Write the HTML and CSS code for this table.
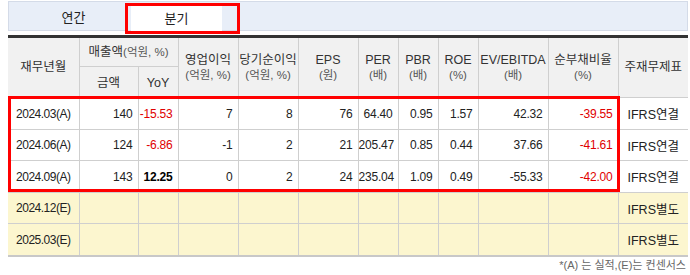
FILE: index.html
```html
<!DOCTYPE html>
<html lang="ko">
<head>
<meta charset="utf-8">
<link rel="stylesheet" href="styles.css">
</head>
<body>
<div class="wrap">
  <div class="tabs">
    <div class="tab">연간</div>
    <div class="tab active">분기</div>
    <div class="tab-mark"></div>
  </div>
  <div class="table-box">
    <table class="fin">
      <colgroup>
        <col class="c71"><col class="c59"><col class="c40"><col class="c60"><col class="c60"><col class="c60">
        <col class="c40"><col class="c40"><col class="c40"><col class="c70"><col class="c70"><col class="c70">
      </colgroup>
      <thead>
        <tr class="h1">
          <th rowspan="2">재무년월</th>
          <th colspan="2">매출액<span class="unit">(억원, %)</span></th>
          <th rowspan="2">영업이익<br><span class="unit">(억원, %)</span></th>
          <th rowspan="2">당기순이익<br><span class="unit">(억원, %)</span></th>
          <th rowspan="2">EPS<br><span class="unit">(원)</span></th>
          <th rowspan="2">PER<br><span class="unit">(배)</span></th>
          <th rowspan="2">PBR<br><span class="unit">(배)</span></th>
          <th rowspan="2">ROE<br><span class="unit">(%)</span></th>
          <th rowspan="2">EV/EBITDA<br><span class="unit">(배)</span></th>
          <th rowspan="2">순부채비율<br><span class="unit">(%)</span></th>
          <th rowspan="2">주재무제표</th>
        </tr>
        <tr class="h2">
          <th>금액</th>
          <th>YoY</th>
        </tr>
      </thead>
      <tbody>
        <tr>
          <td class="date">2024.03(A)</td><td>140</td><td class="neg">-15.53</td><td>7</td><td>8</td><td>76</td><td>64.40</td><td>0.95</td><td>1.57</td><td>42.32</td><td class="neg">-39.55</td><td class="std">IFRS연결</td>
        </tr>
        <tr>
          <td class="date">2024.06(A)</td><td>124</td><td class="neg">-6.86</td><td>-1</td><td>2</td><td>21</td><td>205.47</td><td>0.85</td><td>0.44</td><td>37.66</td><td class="neg">-41.61</td><td class="std">IFRS연결</td>
        </tr>
        <tr>
          <td class="date">2024.09(A)</td><td>143</td><td class="pos">12.25</td><td>0</td><td>2</td><td>24</td><td>235.04</td><td>1.09</td><td>0.49</td><td>-55.33</td><td class="neg">-42.00</td><td class="std">IFRS연결</td>
        </tr>
        <tr class="est">
          <td class="date">2024.12(E)</td><td></td><td></td><td></td><td></td><td></td><td></td><td></td><td></td><td></td><td></td><td class="std">IFRS별도</td>
        </tr>
        <tr class="est">
          <td class="date">2025.03(E)</td><td></td><td></td><td></td><td></td><td></td><td></td><td></td><td></td><td></td><td></td><td class="std">IFRS별도</td>
        </tr>
      </tbody>
    </table>
    <div class="row-mark"></div>
  </div>
  <p class="note">*(A) 는 실적,(E)는 컨센서스</p>
</div>
</body>
</html>
```
FILE: styles.css
```css
html, body {
  margin: 0;
  padding: 0;
  background: #fff;
}
body {
  font-family: "Liberation Sans", "Noto Sans CJK KR", sans-serif;
  font-size: 12px;
  color: #333;
}
.wrap {
  width: 680px;
  padding: 1px 0 0 8px;
}
.tabs {
  position: relative;
  display: flex;
  height: 28px;
  background: #e8eef8;
  border: 1px solid #d4dbe8;
}
.tab {
  width: 91px;
  display: flex;
  align-items: center;
  justify-content: center;
  font-size: 13px;
  color: #222;
}
.tab:first-child {
  margin-left: 19px;
  margin-right: 12px;
}
.tab.active {
  background: #fff;
  margin-top: 2px;
  height: 27px;
}
.tab-mark {
  position: absolute;
  left: 116px;
  top: 1px;
  width: 109px;
  height: 25px;
  border: 3px solid #f00;
}
.table-box {
  position: relative;
  margin-top: 4px;
}
.fin {
  width: 680px;
  table-layout: fixed;
  border-collapse: collapse;
  border-top: 3px solid #333;
  border-bottom: 2px solid #c8c8c8;
}
.c71 { width: 71px; }
.c59 { width: 59px; }
.c40 { width: 40px; }
.c60 { width: 60px; }
.c70 { width: 70px; }
.fin th {
  background: #f1f1f1;
  font-weight: normal;
  color: #333;
  border: 1px solid #cfcfcf;
  border-top: none;
  padding: 0;
  line-height: 15px;
  font-size: 12.5px;
  text-align: center;
}
.fin th:first-child { border-left: none; }
.fin th:last-child { border-right: none; }
.fin tr.h1 th { height: 28px; }
.fin tr.h2 th { height: 28px; padding-top: 2px; }
.unit {
  font-size: 11.5px;
  color: #555;
}
.fin td {
  height: 30px;
  border: 1px solid #cfcfcf;
  padding: 0 5px 0 0;
  text-align: right;
  font-size: 12px;
  color: #222;
  letter-spacing: -0.2px;
}
.fin tbody tr:nth-child(odd) td { height: 31px; }
.fin td:first-child { border-left: none; }
.fin td:last-child { border-right: none; }
.fin td.date {
  text-align: center;
  padding: 0;
  letter-spacing: -0.5px;
}
.fin td.std {
  text-align: center;
  padding: 0;
  font-size: 12.5px;
  letter-spacing: 0;
}
.fin td.neg { color: #e00000; }
.fin td.pos { color: #000; font-weight: bold; }
.fin tr.est td { background: #fcf6cf; }
.row-mark {
  position: absolute;
  left: 0;
  top: 61px;
  width: 606px;
  height: 90px;
  border: 3px solid #f00;
}
.note {
  margin: 2px 2px 0 0;
  text-align: right;
  font-size: 11px;
  line-height: 13px;
  color: #666;
}
```
